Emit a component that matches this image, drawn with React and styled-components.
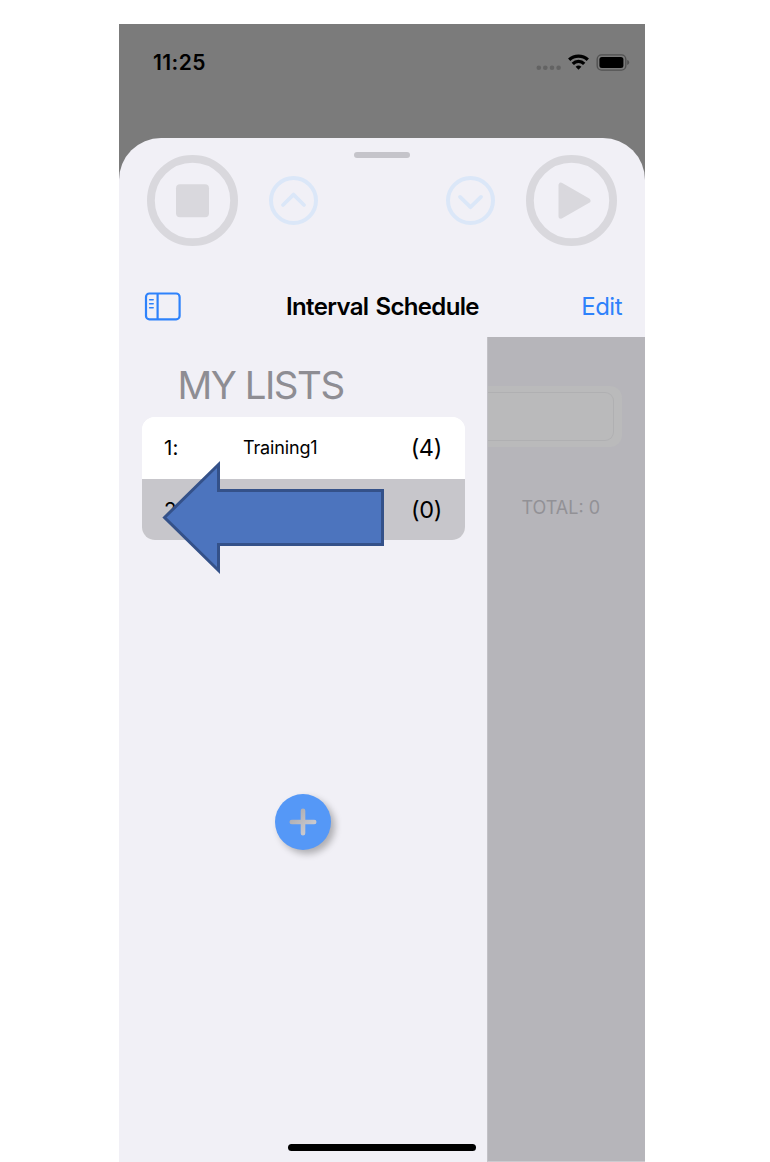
import React from "react";
import styled, { createGlobalStyle } from "styled-components";

const GlobalStyle = createGlobalStyle`
  * { box-sizing: border-box; }
  body { margin: 0; background: #fff; font-family: Inter, "Liberation Sans", sans-serif; }
`;

const Page = styled.div`
  height: 1162px;
  padding: 24px 0 0 119px;
  overflow: hidden;
`;

const Phone = styled.div`
  position: relative;
  width: 526px;
  height: 1138px;
  background: #7b7b7b;
  overflow: hidden;
`;

const StatusBar = styled.div`
  display: flex;
  justify-content: space-between;
  align-items: flex-start;
  height: 114px;
  padding: 26px 14.5px 0 34px;
`;

const Time = styled.span`
  font-size: 21px;
  line-height: 26px;
  font-weight: 600;
  letter-spacing: 0.4px;
`;

const StatusIcons = styled.svg`
  display: block;
  width: 96px;
  height: 26px;
`;

const Sheet = styled.main`
  height: 1024px;
  display: flex;
  flex-direction: column;
  background: #f1f0f6;
  border-radius: 42px 42px 0 0;
  overflow: hidden;
`;

const Grabber = styled.div`
  flex: none;
  width: 56px;
  height: 6px;
  margin: 13.5px auto 0;
  border-radius: 3px;
  background: #c5c4ca;
`;

const Controls = styled.div`
  flex: none;
  display: flex;
  align-items: center;
  height: 91px;
  margin-top: -2.3px;
  padding: 0 28px;
`;

const RoundButton = styled.button`
  flex: none;
  display: block;
  padding: 0;
  border: 0;
  background: none;
  width: ${(p) => p.$size}px;
  height: ${(p) => p.$size}px;
  margin-left: ${(p) => p.$gap || 0}px;
  svg { display: block; width: 100%; height: 100%; }
`;

const NavBar = styled.header`
  flex: none;
  display: grid;
  grid-template-columns: 110px 1fr 110px;
  align-items: center;
  height: 62px;
  margin-top: 28.8px;
  padding: 0 23px 0 25px;
`;

const SidebarIcon = styled.svg`
  display: block;
  width: 37px;
  height: 29px;
`;

const Title = styled.h1`
  margin: 0 -20px 0 -21px;
  padding-top: 2px;
  text-align: center;
  font-size: 24px;
  line-height: 30px;
  font-weight: 600;
  white-space: nowrap;
  letter-spacing: -0.65px;
  word-spacing: 1.6px;
`;

const EditButton = styled.button`
  justify-self: end;
  padding: 2px 0 0;
  border: 0;
  background: none;
  color: #2e82fb;
  font: 400 24px/30px Inter, "Liberation Sans", sans-serif;
  letter-spacing: -0.5px;
`;

const Body = styled.div`
  flex: 1;
  display: flex;
  min-height: 0;
`;

const Drawer = styled.aside`
  width: 368px;
  display: flex;
  flex-direction: column;
  padding: 24px 22.5px 0 22.5px;
`;

const SectionTitle = styled.h2`
  margin: 0 0 8px 36px;
  font-size: 38.5px;
  line-height: 48px;
  font-weight: 400;
  color: #8e8d93;
  letter-spacing: -1.5px;
  white-space: nowrap;
`;

const List = styled.div`
  border-radius: 13px;
  overflow: hidden;
  background: #fff;
`;

const Row = styled.div`
  display: grid;
  grid-template-columns: 79px 1fr auto;
  align-items: center;
  height: 61.5px;
  padding: 0 22.6px 0 22.5px;
  background: ${(p) => (p.$selected ? "#c7c6cb" : "#fff")};
`;

const Index = styled.span`
  font-size: 20.5px;
  letter-spacing: 0.2px;
`;

const Name = styled.span`
  font-size: 18px;
  letter-spacing: -0.15px;
`;

const Count = styled.span`
  font-size: 23.5px;
  letter-spacing: -0.35px;
`;

const AddButton = styled.button`
  width: 56px;
  height: 56px;
  margin: 254px 0 0 133.5px;
  padding: 0;
  border: 0;
  border-radius: 50%;
  background: #5598f7;
  box-shadow: 4px 4px 7px rgba(0, 0, 0, 0.28);
  svg { display: block; }
`;

const Dimmed = styled.section`
  flex: 1;
  background: #b6b5ba;
  border-left: 1px solid #c2c1c6;
  border-bottom: 1px solid #cccbd0;
  padding-top: 49px;
`;

const Card = styled.div`
  width: 134px;
  height: 61px;
  padding: 6px 8px 6px 0;
  border-radius: 0 12px 12px 0;
  background: #bababb;
`;

const Field = styled.div`
  height: 49px;
  border: 1px solid #b0b0b2;
  border-left: 0;
  border-radius: 0 9px 9px 0;
`;

const Total = styled.div`
  margin: 49px 45px 0 0;
  text-align: right;
  font-size: 18px;
  line-height: 24px;
  color: #929196;
  white-space: nowrap;
`;

const Arrow = styled.svg`
  position: absolute;
  left: 41px;
  top: 434px;
  width: 228px;
  height: 120px;
`;

const HomeIndicator = styled.div`
  position: absolute;
  left: 169px;
  bottom: 11px;
  width: 188px;
  height: 7px;
  border-radius: 4px;
  background: #000;
`;

function Chevron({ d }) {
  return (
    <svg viewBox="0 0 49 49" fill="none" stroke="#dbe7f8" strokeWidth="4">
      <circle cx="24.5" cy="24.5" r="22.5" />
      <path d={d} strokeWidth="3.8" strokeLinecap="round" strokeLinejoin="round" />
    </svg>
  );
}

export default function App() {
  return (
    <Page>
      <GlobalStyle />
      <Phone>
        <StatusBar>
          <Time>11:25</Time>
          <StatusIcons viewBox="0 0 96 26">
            <g fill="#636363">
              <circle cx="3.8" cy="17.7" r="2.3" />
              <circle cx="10.3" cy="17.7" r="2.3" />
              <circle cx="17" cy="17.7" r="2.3" />
              <circle cx="23.6" cy="17.7" r="2.3" />
            </g>
            <g fill="none" stroke="#000" strokeWidth="3.3">
              <path d="M34.2 9.8 A13.4 13.4 0 0 1 52.8 9.8" />
              <path d="M37.8 13.8 A8 8 0 0 1 49.2 13.8" />
            </g>
            <path d="M40.6 16.7 Q43.5 14.4 46.4 16.7 L43.5 19.7 Z" />
            <rect x="62.2" y="4.9" width="28.6" height="15.2" rx="4.4" fill="none" stroke="#515151" strokeWidth="1.4" />
            <rect x="64.4" y="7" width="24" height="11" rx="2.5" />
            <path d="M92.2 10 Q94.2 10.5 94.2 12.4 T92.2 15 Z" fill="#515151" />
          </StatusIcons>
        </StatusBar>
        <Sheet>
          <Grabber />
          <Controls>
            <RoundButton $size={91} aria-label="Stop">
              <svg viewBox="0 0 91 91" fill="#d9d8dd">
                <circle cx="45.5" cy="45.5" r="41.6" fill="none" stroke="#d9d8dd" strokeWidth="7.8" />
                <rect x="29" y="29.2" width="33" height="33" rx="4" />
              </svg>
            </RoundButton>
            <RoundButton $size={49} $gap={31} aria-label="Previous">
              <Chevron d="M14 29 L24.5 18.6 L35 29" />
            </RoundButton>
            <RoundButton $size={49} $gap={128} aria-label="Next">
              <Chevron d="M14 20.9 L24.5 31.2 L35 20.9" />
            </RoundButton>
            <RoundButton $size={91} $gap={31} aria-label="Play">
              <svg viewBox="0 0 91 91" fill="#d9d8dd">
                <circle cx="45.5" cy="45.5" r="41.6" fill="none" stroke="#d9d8dd" strokeWidth="7.8" />
                <path d="M35 30.2 V61.2 L62 45.7 Z" stroke="#d9d8dd" strokeWidth="5" strokeLinejoin="round" />
              </svg>
            </RoundButton>
          </Controls>
          <NavBar>
            <SidebarIcon viewBox="0 0 37 29" fill="none" stroke="#2e82fb" strokeWidth="2.2">
              <rect x="2" y="1.5" width="33.6" height="25.8" rx="3.4" />
              <path d="M13.6 2 V27" />
              <path d="M5.6 7.7 H9.2 M5.6 11.7 H9.2 M5.6 15.7 H9.2" strokeWidth="1.5" strokeLinecap="round" />
            </SidebarIcon>
            <Title>Interval Schedule</Title>
            <EditButton>Edit</EditButton>
          </NavBar>
          <Body>
            <Drawer>
              <SectionTitle>MY LISTS</SectionTitle>
              <List>
                <Row>
                  <Index>1:</Index>
                  <Name>Training1</Name>
                  <Count>(4)</Count>
                </Row>
                <Row $selected>
                  <Index>2:</Index>
                  <Name />
                  <Count>(0)</Count>
                </Row>
              </List>
              <AddButton aria-label="Add list">
                <svg viewBox="0 0 56 56" width="56" height="56">
                  <defs>
                    <linearGradient id="plus" gradientUnits="userSpaceOnUse" x1="17" y1="17" x2="38" y2="38">
                      <stop offset="0" stopColor="#aaa9ad" />
                      <stop offset="1" stopColor="#d0cfd4" />
                    </linearGradient>
                  </defs>
                  <path d="M28 16.8 V39.2 M16.8 28 H39.2" fill="none" stroke="url(#plus)" strokeWidth="4.6" strokeLinecap="round" />
                </svg>
              </AddButton>
            </Drawer>
            <Dimmed>
              <Card>
                <Field />
              </Card>
              <Total>TOTAL: 0</Total>
            </Dimmed>
          </Body>
        </Sheet>
        <Arrow viewBox="0 0 228 120">
          <path d="M4.5 59.5 L58.5 6.5 V32.5 H222.5 V86.5 H58.5 V112.5 Z" fill="#4c74be" stroke="#345189" strokeWidth="3" />
        </Arrow>
        <HomeIndicator />
      </Phone>
    </Page>
  );
}
